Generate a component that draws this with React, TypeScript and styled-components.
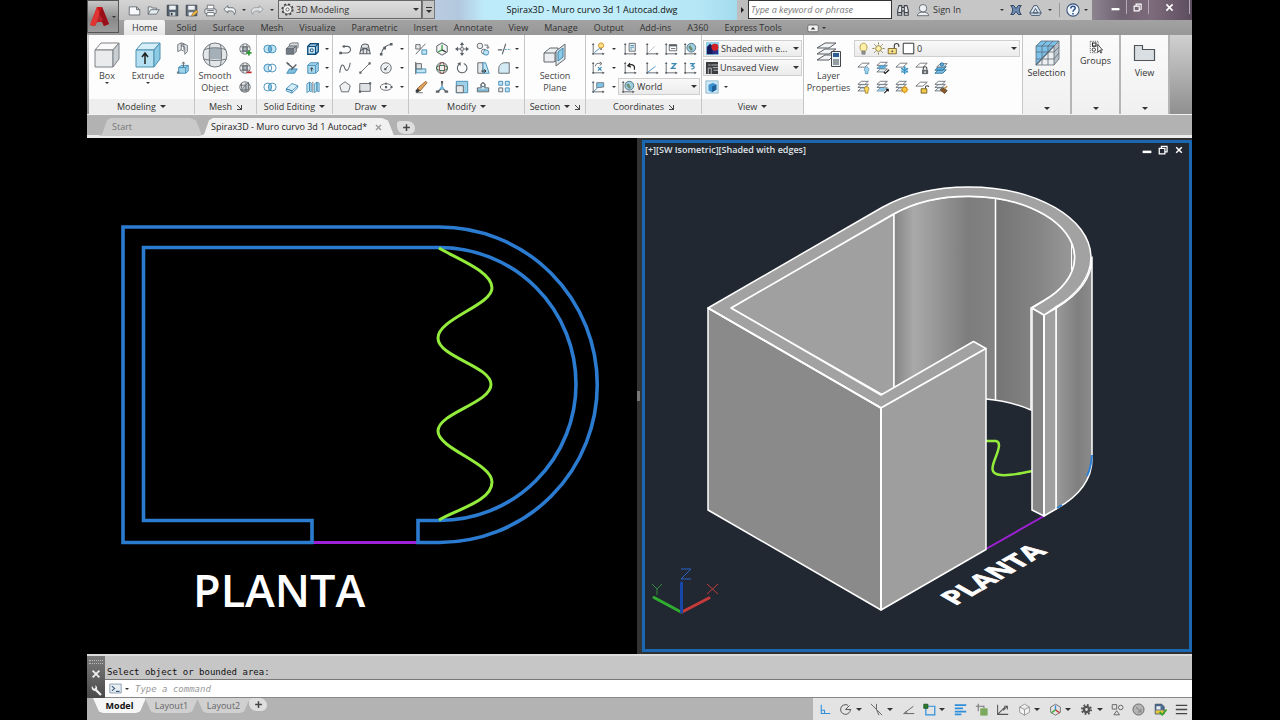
import React from "react";
import styled, { createGlobalStyle, css } from "styled-components";

const ui = `"Open Sans", "Noto Sans", sans-serif`;
const mono = `"DejaVu Sans Mono", "Liberation Mono", monospace`;

const GlobalStyle = createGlobalStyle`
  *, *::before, *::after { box-sizing: border-box; }
  body { margin: 0; background: #000; font-family: ${ui}; font-size: 9px; line-height: 12px; color: #333; }
  button, input, select { font: inherit; color: inherit; margin: 0; }
  button { border: 0; padding: 0; background: none; cursor: pointer; }
  svg { display: block; flex: none; }
`;

/* ---------- icons: 16 x 16 grid ---------- */
const K = "#5a6066";
const B = "#3b88b4";
const L = "#bfe4f4";
const axes = (
  <>
    <path d="M2.500 2v11.500H15" stroke={K} fill="none" />
    <path d="M1 3.500 2.500 1 4 3.500M13 12l2.500 1.500L13 15M1.500 12.500h2v2h-2z" fill={K} />
  </>
);
const sheets = (
  <g fill="#e8f4fa" stroke={K} strokeWidth=".9">
    <path d="M1 12.500 5 9h8l-4 3.500z" />
    <path d="M1 8.500 5 5h8L9 8.500z" />
    <path d="M1 5 5 1.500h8L9 5z" fill="#fff" />
  </g>
);
const oneSheet = <path d="M1 7 6 2.500h8L9 7z" fill="#fff" stroke={K} strokeWidth=".9" />;
const two = (a: string, b: string, c: string) => (
  <>
    <circle cx="5.500" cy="8" r="4.500" fill={a} />
    <circle cx="10.500" cy="8" r="4.500" fill={b} />
    <path d="M8 4.300a4.500 4.500 0 0 1 0 7.400 4.500 4.500 0 0 1 0-7.400z" fill={c} />
    <g fill="none" stroke={B}>
      <circle cx="5.500" cy="8" r="4.500" />
      <circle cx="10.500" cy="8" r="4.500" />
    </g>
  </>
);
const sphere = (
  <g stroke={K} strokeWidth=".8">
    <circle cx="8" cy="8" r="6" fill="#e9ebec" />
    <path d="M5.500 5.500h5v5h-5z" fill="#a9b2b9" />
    <path d="M2.500 5.500h11M2.500 10.500h11M6 2.500 5.500 5.500v5L6 13.500M10 2.500l.5 3v5l-.5 3" fill="none" />
  </g>
);

const icons: Record<string, React.ReactNode> = {
  new: <path d="M1.500 3.500h9l4 3.500v6.500h-13zM10.500 3.500V7h4" fill="#f7f9fa" stroke={K} />,
  open: <path d="M1.500 12.500v-9h4l1 1.500h5v2M1.500 12.500l3-5.500h10.500l-3.500 5.500z" fill="#e7eef2" stroke={K} />,
  save: (
    <>
      <path d="M1.500 1.500h13v13h-13z" fill="#54616e" stroke="#333b44" />
      <path d="M4 2h8v5H4z" fill="#eef2f5" />
      <path d="M4.500 10h7v4.500h-7z" fill="#c9d3da" />
      <path d="M6 11h2v3H6z" fill="#333" />
    </>
  ),
  saveas: (
    <>
      <path d="M1.500 1.500h13v13h-13z" fill="#66717c" stroke="#333b44" />
      <path d="M4 2h8v5H4zM4.500 10h6v4.500h-6z" fill="#eef2f5" />
      <path d="m8 15 1-3 5-4.500 2 2L11 14z" fill="#f2c04c" stroke="#8a5a12" strokeWidth=".7" />
    </>
  ),
  print: (
    <g stroke={K}>
      <path d="M4 6V1.500h8V6" fill="#fff" />
      <rect x="1" y="6" width="14" height="6" rx="1.500" fill="#dfe3e6" />
      <path d="M4 10.500h8l1 4H3z" fill="#fff" />
      <path d="M4 8h8" />
    </g>
  ),
  undo: <path d="M1 6.500 6 2v2.500h3.500A5 5 0 0 1 14 13c0-3-2-4.500-4.500-4.500H6V11z" fill="#eef3f6" stroke={K} />,
  redo: <path d="M15 6.500 10 2v2.500H6.500A5 5 0 0 0 2 13c0-3 2-4.500 4.500-4.500H10V11z" fill="#e2e4e5" stroke="#8f9497" />,
  gear: (
    <>
      <circle cx="8" cy="8" r="6.500" fill="none" stroke="#444" strokeWidth="2" strokeDasharray="2.600 2.500" />
      <circle cx="8" cy="8" r="5.400" fill="#f4f4f4" stroke="#444" />
      <circle cx="8" cy="8" r="2" fill="#fff" stroke="#444" />
    </>
  ),
  gearDark: (
    <>
      <circle cx="8" cy="8" r="5.500" fill="none" stroke="#555" strokeWidth="2.500" strokeDasharray="2.200 2.100" />
      <circle cx="8" cy="8" r="3.200" fill="none" stroke="#555" strokeWidth="3" />
    </>
  ),
  binoculars: (
    <path d="M2 14V8l1.500-5h3v11zM9.500 14V3h3L14 8v6zM6.500 5h3v4h-3zM2 11h4.500M9.500 11H14" fill="#e4e4e6" stroke="#3b4048" strokeWidth="1.200" />
  ),
  user: (
    <g fill="#eef1f4" stroke={K}>
      <path d="M1.500 14.500c0-3 3-3.500 5-4h3c2 .5 5 1 5 4z" />
      <circle cx="8" cy="6" r="4.300" />
    </g>
  ),
  exchange: (
    <path d="M1 2h4l3 4 3-4h4c-2 3-2.500 4-2.500 6s.5 3 2.500 6h-4l-3-4-3 4H1c2-3 2.500-4 2.500-6S3 5 1 2z" fill="#6f8db4" stroke="#1f3452" strokeWidth="1.100" />
  ),
  a360: (
    <g fill="#dfe8f2" stroke="#46586e" strokeWidth="1.200">
      <path d="M6 2h4l5 9-2 3H3l-2-3z" />
      <path d="M8 5.500 11 11H5zM1 11h14" fill="none" />
    </g>
  ),
  help: (
    <>
      <circle cx="8" cy="8" r="7" fill="#f4f8fc" stroke="#35507a" strokeWidth="1.200" />
      <path d="M5.500 6.200c0-3.400 5-3.200 5-.3 0 1.800-2.500 1.900-2.500 4M8 11.300v1.700" fill="none" stroke="#2a4f8f" strokeWidth="1.800" />
    </>
  ),
  polysolid: (
    <g fill="#e3e6e8" stroke={K} strokeWidth=".9">
      <path d="M2 3l4-2v8l-4 2zM6 4l3-2 4 2v7l-3 3V6z" />
      <path d="M6 1l3 1v7M6 9l3 1.500" fill="none" />
    </g>
  ),
  presspull: (
    <>
      <path d="M3 7.500 6 5h8v6.500l-3 2.500H3z" fill="#9fd3ec" stroke={B} />
      <path d="M3 7.500h8V14M11 7.500 14 5" fill="none" stroke={B} />
      <path d="M8.500 7V1.500M7 3l1.500-2L10 3" fill="none" stroke={K} />
      <path d="M1 12h3v2.500H1z" fill="#6e7f8b" />
    </>
  ),
  meshMore: (
    <>
      {sphere}
      <path d="M12.500 9.500v6M9.500 12.500h6" stroke="#2f9a35" strokeWidth="2" />
    </>
  ),
  meshLess: (
    <>
      {sphere}
      <path d="M10 13h5.500" stroke="#c2262b" strokeWidth="2" />
    </>
  ),
  meshRefine: (
    <g stroke={K} strokeWidth=".9">
      <circle cx="8" cy="8" r="6" fill="#e6e9ea" />
      <path d="M3 11.500 12 2.500v8.500z" fill="#b8c0c5" />
      <path d="M4 3.500v6M2.500 6H8M9 3v10M3.500 12.500h9" fill="none" />
    </g>
  ),
  union: two(L, L, "#6fb6da"),
  subtract: two(L, "#fff", "#fff"),
  intersect: two("#fff", "#fff", "#8fcbe6"),
  cubeGrey: (
    <g stroke={K} strokeWidth=".9">
      <path d="M5 5V2.500L8 1h7v5l-3 3" fill="#d5dadd" />
      <path d="M1.500 14V7.500h8V14z" fill="#737c84" />
      <path d="M1.500 7.500 5 4.500h8L9.500 7.500zM9.500 14V7.500l3.500-3V11z" fill="#aab1b7" />
    </g>
  ),
  slice: (
    <>
      <path d="M5 9h9l-3 5H2z" fill="#7fbfe0" stroke={B} />
      <path d="m2 2 7 6M7 10 13 4" stroke={K} strokeWidth="1.600" />
      <path d="m1 1 4 1.500L4 5z" fill={K} />
    </>
  ),
  thicken: <path d="M1.500 10 8 4l6.500 2.500L8 12.500zM1.500 10v2.500L8 15v-2.500M8 15l6.500-6V6.500M8 12.500 1.500 10" fill="#d7eef8" stroke={B} />,
  boxEdges: (
    <g fill="#cfeaf6" stroke="#0c4d7c" strokeWidth="1.600">
      <path d="M2 5 5 2h9v9l-3 3H2z" />
      <path d="M2 5h9v9M11 5l3-3" fill="none" />
      <path d="M5 8h3v3H5z" fill="#fff" strokeWidth="1" />
    </g>
  ),
  boxExtrude: (
    <g fill="#a9d9ee" stroke={B}>
      <path d="M2 5 5 2h9v9l-3 3H2z" />
      <path d="M2 5h9v9M11 5l3-3" fill="none" />
      <path d="M6.500 12V8M5 9.500l1.500-2L8 9.500" stroke="#333" fill="none" />
    </g>
  ),
  separate: (
    <g fill="#bfe4f4" stroke={B} strokeWidth=".9">
      <path d="M1 4.500 4 2.500v10l-3 2zM4 2.500l2 1v10l-2-1zM9.500 4.500l3-2v10l-3 2zM12.500 2.500l2.500 1v10l-2.500-1z" />
      <path d="M7.800 2v12.500" stroke={K} />
    </g>
  ),
  polyline: (
    <>
      <path d="M6 5h4.500a3.500 3.500 0 0 1 0 7.500H4" fill="none" stroke={K} strokeWidth="1.200" />
      <path d="M1.500 11h3v3h-3zM7.500 3l-3 2 3 2z" fill={K} />
    </>
  ),
  spline: <path d="M2 13.500C3 3 6 3 7.500 7.500S12 13 14 2" fill="none" stroke={K} strokeWidth="1.200" />,
  polygon: <path d="M8 2l6 4.500L12 13.500H4L2 6.500z" fill="#eef0f1" stroke={K} />,
  helix: (
    <g fill="none" stroke={K} strokeWidth="1.200">
      <path d="M2 13.500 4 5c0-3.500 8-3.500 8 0l2 8.500z" fill="#e3e6e8" />
      <path d="M6 13.500V9c0-2.500 4-2.500 4 0v4.500M5 6.500c2 2 4 2 6 0M3.500 10c3-4 5-4 9 0" />
    </g>
  ),
  line: (
    <>
      <path d="M3 13 13 3" stroke={K} />
      <path d="M1.500 12h2.500v2.500H1.500zM12 1.500h2.500V4H12z" fill={K} />
    </>
  ),
  rect: (
    <>
      <path d="M2 4h12v9H2z" fill="#dfe2e4" stroke={K} />
      <path d="M1 12h2.500v2.500H1zM12.500 2.500H15V5h-2.500z" fill={K} />
    </>
  ),
  arc: (
    <>
      <path d="M2.500 14C3.500 8 7 3.500 14 2.500" fill="none" stroke={K} strokeWidth="1.200" />
      <path d="M1 12.500h3v3H1zM12.500 1h3v3h-3zM5 5.500h3v3H5z" fill={K} />
    </>
  ),
  circle: (
    <>
      <circle cx="8" cy="8" r="6" fill="#eceeef" stroke={K} />
      <path d="M7 9l3.500-3.500" stroke={K} />
      <path d="M6 8h2.500v2.500H6z" fill={K} />
    </>
  ),
  ellipse: (
    <>
      <ellipse cx="8" cy="8" rx="6.500" ry="3.800" fill="#fff" stroke={K} />
      <path d="M6.800 6.800h2.500v2.500H6.800zM7 3h2v2H7zM13 7h2.500v2H13z" fill={K} />
    </>
  ),
  threeScale: (
    <>
      <path d="M2 14 13 2" stroke={K} />
      <path d="M2 3h5v5H2z" fill="#eee" stroke={K} />
      <path d="M9 9h5.500v5H9z" fill={L} stroke={B} />
    </>
  ),
  align: (
    <>
      <path d="M2 1v14" stroke={K} strokeWidth="1.200" />
      <path d="M2.500 9h11v4.500h-11z" fill={L} stroke={B} />
      <path d="M2.500 3h6v6h-6z" fill="#dfe3e6" stroke={K} />
    </>
  ),
  erase: (
    <>
      <path d="M2 14.500h8" stroke={K} />
      <path d="m4 9.500 3 3L15 3 13.300 1.500z" fill="#e3a55c" stroke="#7a4818" strokeWidth=".8" />
      <path d="m4 9.500-2.500 3L3 14.500l4-2z" fill="#3b3b3b" />
    </>
  ),
  gizmoMove: (
    <>
      <path d="M8 1 14 4.500v7L8 15l-6-3.500v-7z" fill="#f2f4f5" stroke={K} strokeWidth="1.100" />
      <path d="M8 9V3M8 9l-4.500 2.500" stroke="#2f9a35" strokeWidth="1.400" />
      <path d="m8 9 4.500 2.500" stroke="#333" strokeWidth="1.400" />
    </>
  ),
  gizmoRotate: (
    <g fill="none" stroke={K} strokeWidth="1.100">
      <circle cx="8" cy="8" r="6.300" fill="#eef0f1" />
      <ellipse cx="8" cy="8" rx="3" ry="6.300" stroke="#8d4a4a" />
      <ellipse cx="8" cy="8" rx="6.300" ry="3" stroke="#3c6c45" />
    </g>
  ),
  gizmoScale: (
    <>
      <path d="M8 3v6l-5 4.500M8 9l5 4.500" fill="none" stroke={K} strokeWidth="1.500" />
      <path d="M6.800 1h2.500v3H6.800zM1 12h4v2.500H1zM11 12h4v2.500h-4z" fill={K} />
      <path d="M5 10l3-4 3 4-3 1z" fill="#6fb6da" />
    </>
  ),
  move: (
    <>
      <path d="M8 2v12M2 8h12" stroke={K} strokeWidth="1.200" />
      <path d="M8 0l2.500 3.500h-5zM8 16l2.500-3.500h-5zM0 8l3.500-2.500v5zM16 8l-3.500-2.500v5z" fill={K} />
      <path d="M6.500 6.500h3v3h-3z" fill="#fff" stroke={K} strokeWidth=".8" />
    </>
  ),
  rotate: (
    <>
      <path d="M5 3.500a5.500 5.500 0 1 0 5-.7" fill="none" stroke={K} strokeWidth="1.200" />
      <path d="M6.500 1v4.500L2.500 3z" fill={K} />
    </>
  ),
  scale: (
    <>
      <path d="M1.500 1.500h13v13h-13z" fill="#9ed0e8" stroke={B} />
      <path d="M1.500 6.500h8v8h-8z" fill="#e6e8ea" stroke={K} />
    </>
  ),
  copy: (
    <>
      <circle cx="4.500" cy="4.500" r="3.200" fill="#eee" stroke={K} />
      <circle cx="9" cy="11" r="2.800" fill="#fff" stroke={K} />
      <circle cx="11.500" cy="12" r="3" fill={L} stroke={B} />
      <path d="M9.500 3.500h4v3M12 5.500l1.500 2 1.500-2" fill="none" stroke={K} />
    </>
  ),
  stretch: (
    <>
      <path d="M2 2h6v12H2z" fill="#e4e7e9" stroke={K} />
      <path d="M8 2h3l4 12H8z" fill={L} stroke={B} />
      <path d="M6 11.500h5M9 9.500l2.500 2L9 13.500" fill="none" stroke="#222" />
    </>
  ),
  mirror: (
    <>
      <path d="M1.500 13.500h13V9H10c3-8-7-8-4 0H1.500z" fill={L} stroke={K} strokeWidth="1.100" />
      <path d="M2 11.500h12" stroke={B} />
      <circle cx="8" cy="5.500" r="2" fill="#fff" stroke={K} />
    </>
  ),
  trim: (
    <>
      <path d="M1 9h5M6 14 10 2" stroke={K} strokeWidth="1.200" />
      <path d="M9 8.500h7" stroke={B} strokeDasharray="2 1.300" />
    </>
  ),
  fillet: <path d="M2 14V9c0-4 3-7 7-7h5v12z" fill="#d3e9f3" stroke={K} />,
  array: (
    <g fill={L} stroke={B}>
      <path d="M2 1.500h4.500V6H2zM9.500 1.500H14V6H9.500zM9.500 9H14v4.500H9.500z" />
      <path d="M2 9h4.500v4.500H2z" fill="#eee" stroke={K} />
    </g>
  ),
  ucsIcon: (
    <>
      {axes}
      <path d="m4 12 6-5" stroke={B} />
      <circle cx="11.500" cy="4" r="3" fill="#ffe08a" stroke="#c98d1c" />
      <path d="M10.500 7h2v2h-2z" fill="#777" />
    </>
  ),
  ucsRot: (
    <>
      {axes}
      <path d="M5 6c0-3 3-4 6-3M10 1l2.500 2L10 5" fill="none" stroke={K} />
      <path d="m8 7 4 4m0-4-4 4" stroke={B} strokeWidth="1.500" />
    </>
  ),
  ucsFace: (
    <>
      {axes}
      <path d="M6.500 3h8v5l-8 1z" fill="#7fc3e6" stroke={K} strokeWidth=".8" />
      <path d="m3 13 4-3.500" stroke={B} />
    </>
  ),
  ucsSheet: (
    <>
      {axes}
      <path d="M7 1.500h7v9H7z" fill="#eef3f6" stroke={K} />
      <path d="M8.500 4h4M8.500 6h4M8.500 8h2" stroke={B} />
    </>
  ),
  ucsPrev: (
    <>
      {axes}
      <path d="M6 5c5-2 8 0 7 5M8 2.500 5.500 5.500 9 7" fill="none" stroke="#222" strokeWidth="1.300" />
    </>
  ),
  ucsOrigin: (
    <>
      {axes}
      <path d="m4 12 7-7" stroke="#b4bcc2" />
    </>
  ),
  ucsVector: (
    <>
      {axes}
      <path d="M3 13 12 6" stroke={B} />
    </>
  ),
  ucsNamed: (
    <>
      {axes}
      <path d="M6 3h8.500v7H6z" fill="#fff" stroke={K} />
      <path d="M6 3h8.500v2H6z" fill={K} />
      <path d="M8 7.500h5" stroke={K} />
    </>
  ),
  ucsZ: (
    <>
      {axes}
      <path d="M8.500 3h5l-5 5.500h5" fill="none" stroke={B} strokeWidth="1.500" />
    </>
  ),
  ucsWorld: (
    <>
      {axes}
      <circle cx="9.500" cy="6.500" r="5" fill="#9fd0e2" stroke="#4b6c7c" />
      <path d="M6.500 5c1-2 3-1 3 .5s2 1 1.500 3-2 2-3 0S6 7 6.500 5z" fill="#6f8f75" />
    </>
  ),
  ucs3: (
    <>
      {axes}
      <path d="M8 3h4.500L10 5.500c4 0 3.500 4-.5 3.500" fill="none" stroke={B} strokeWidth="1.500" />
    </>
  ),
  shaded: (
    <>
      <path d="M0 0h16v16H0z" fill="#8fd0e8" />
      <path d="M1 15V6l4-4 4 4v9z" fill="#141a5c" />
      <path d="M8 15V9h7v6z" fill="#2c2f86" />
      <circle cx="11" cy="6.500" r="4.300" fill="#d22027" />
    </>
  ),
  viewSaved: (
    <>
      <path d="M0 0h16v16H0z" fill="#3a3d40" />
      <path d="M3 16V8h4v8M7 4h9M9 7.500h7M3 4h3M10 11h6" stroke="#d8dadb" fill="none" />
    </>
  ),
  viewCube: (
    <>
      <path d="M1 1h14v14H1z" fill="#cde9f7" stroke="#8db3c9" />
      <path d="M4 5.500 9 3l4 2v6l-5 3-4-2z" fill="#3f93cf" />
      <path d="M8 7.500 13 5v6l-5 3z" fill="#1d5f98" />
    </>
  ),
  bulb: (
    <>
      <path d="M5.500 11C2 7 4 1.500 8 1.500S14 7 10.500 11z" fill="#fff2a8" stroke="#a58a35" />
      <path d="M6 11.500h4V15H6z" fill="#8f9498" stroke="#666" strokeWidth=".7" />
    </>
  ),
  sun: (
    <>
      <circle cx="8" cy="8" r="3.500" fill="#fff2a8" stroke="#7c6a2c" />
      <path d="M8 .5v2.500M8 13v2.500M.5 8H3M13 8h2.500M2.700 2.700l1.800 1.800M11.500 11.500l1.800 1.800M13.300 2.700l-1.800 1.800M4.500 11.500l-1.800 1.800" stroke="#7c6a2c" />
    </>
  ),
  unlock: (
    <>
      <path d="M9 8V4.500c0-3.500 5.500-3.500 5.500 0V6" fill="none" stroke="#444" strokeWidth="1.400" />
      <path d="M1.500 8h10v6.500h-10z" fill="#f7df85" stroke="#6d5a20" />
      <path d="M5.500 10.500h2v2h-2z" fill="#555" />
    </>
  ),
  swatch: <path d="M1.500 1.500h13v13h-13z" fill="#fff" stroke="#333" strokeWidth="1.200" />,
  layOff: (
    <>
      {oneSheet}
      <path d="M9.500 12c-2-2-1-5 1.500-5s3.500 3 1.500 5v2.500h-3z" fill="#9fd3ec" stroke={B} strokeWidth=".8" />
    </>
  ),
  layIso: (
    <>
      {sheets}
      <path d="M1 8.500 5 5h8L9 8.500z" fill="#56aede" />
      <path d="M9 12.500l1.500 1.800L15 10" fill="none" stroke="#111" strokeWidth="1.300" />
    </>
  ),
  layFreeze: (
    <>
      {oneSheet}
      <path d="M11 6v9M7 8.300l8 4.500M15 8.300l-8 4.500" stroke="#3a93c4" strokeWidth="1.400" />
      <circle cx="11" cy="10.500" r="3" fill="none" stroke="#3a93c4" />
    </>
  ),
  layLock: (
    <>
      {oneSheet}
      <path d="M9.500 10V8c0-2 4-2 4 0v2" fill="none" stroke="#444" strokeWidth="1.200" />
      <path d="M8 10h7v5H8z" fill="#646b70" />
      <path d="M10.500 12h2v1.500h-2z" fill="#fff" />
    </>
  ),
  layCurrent: (
    <>
      <path d="M1 14 5 10h9l-4 4z" fill="#7dc0e6" stroke="#1f5f88" strokeWidth=".9" />
      <path d="M1 10.500 5 6.500h9l-4 4z" fill="#56aede" stroke="#1f5f88" strokeWidth=".9" />
      <path d="M3 7 7 3h8l-4 4z" fill="#d9effa" stroke={K} strokeWidth=".9" />
      <circle cx="9" cy="4" r="2" fill="#56aede" stroke="#1f5f88" strokeWidth=".8" />
    </>
  ),
  layOn: (
    <>
      {sheets}
      <path d="M9.500 12.500c-2-2-1-5 1.500-5s3.500 3 1.500 5V15h-3z" fill="#fbd85c" stroke="#8c6b17" strokeWidth=".8" />
    </>
  ),
  layUniso: (
    <>
      {sheets}
      <path d="M1 12.500 5 9h8l-4 3.500z" fill="#8cc8e8" />
      <path d="M9.500 15 14 10.500M11.500 10.500H14V13" fill="none" stroke="#111" strokeWidth="1.200" />
    </>
  ),
  layThaw: (
    <>
      {sheets}
      <circle cx="11" cy="11" r="3" fill="#fbc93c" stroke="#c07f12" />
      <path d="M11 6.500v2M11 13.500v2M6.500 11h2M13.500 11h2M8 8l1 1M13 13l1 1M14 8l-1 1M9 13l-1 1" stroke="#e0981a" />
    </>
  ),
  layUnlock: (
    <>
      {oneSheet}
      <path d="M12 10V8c0-2 3.500-2 3.500 0" fill="none" stroke="#444" strokeWidth="1.200" />
      <path d="M7 10h6.500v5H7z" fill="#f3c948" stroke="#6d5a20" />
    </>
  ),
  layMatch: (
    <>
      {sheets}
      <path d="m7 11 3-2 5 3-3 3.500z" fill="#8a5a2b" stroke="#4c2f12" strokeWidth=".8" />
      <path d="m12 10 3-3" stroke="#c79a5b" strokeWidth="2" />
    </>
  ),
  groups: (
    <>
      <path d="M1.500 1.500h9v13h-9z" fill="#fff" stroke={K} strokeDasharray="1.500 1" />
      <path d="M4 3.500h4v3.500H4z" fill="none" stroke="#222" strokeWidth="1.200" />
      <circle cx="5.500" cy="11" r="1.900" fill="none" stroke="#222" />
      <path d="M10 5v9l2-2 1.500 3 1-.5-1.500-3h2.500z" fill="#fff" stroke="#222" strokeWidth=".9" />
    </>
  ),
  prompt: (
    <>
      <path d="M1 2.500h14v11H1z" fill="#e9eef3" stroke="#7b8fa5" />
      <path d="M3.500 5l3.500 3-3.500 3M8.500 11.500H13" fill="none" stroke="#3a5b80" strokeWidth="1.400" />
    </>
  ),
  cross: <path d="M3.500 3.500l9 9M12.500 3.500l-9 9" stroke="currentColor" strokeWidth="2.400" />,
  wrench: <path d="M2.500 2.500A4 4 0 0 0 6.500 8.500l6 6 2-2-6-6A4 4 0 0 0 6 1.500L7 4 5 6z" fill="currentColor" />,
  plus: <path d="M8 2v12M2 8h12" stroke="currentColor" strokeWidth="2.600" />,
  ortho: <path d="M4 2v11h11M4 9h4v4" fill="none" stroke="#2f8fdb" strokeWidth="1.300" />,
  polar: <path d="M14 8a6 6 0 1 1-3-5.200M8 8h7M8 8l5-5" fill="none" stroke="#555" strokeWidth="1.200" />,
  isoDraft: <path d="M1 1l14 14M8 8V1M8 8l3 7" fill="none" stroke="#666" strokeWidth="1.200" />,
  angle: <path d="M14 4 2 13h13M6 13a6 6 0 0 0-1-3" fill="none" stroke="#666" strokeWidth="1.200" />,
  osnap: (
    <>
      <path d="M3.500 4h11v10.500h-11z" fill="none" stroke="#2f8fdb" strokeWidth="1.500" />
      <path d="M1 1.500h5v5H1z" fill="#2c7d2c" stroke="#1b4d1b" />
    </>
  ),
  lineweight: <path d="M1 2.500h14M1 6.500h10M1 10.500h14M1 14h8" stroke="#2f8fdb" strokeWidth="2.200" />,
  cycling: (
    <>
      <path d="M6.500 6.500h9v9h-9z" fill="#79a95c" />
      <path d="M1 4h10v2M4 1v9" fill="none" stroke="#777" strokeWidth="1.300" />
    </>
  ),
  dynUcs: <path d="M2 2v12h13M2 14 11 5M9 9l5-5M10 4h4v4" fill="none" stroke="#555" strokeWidth="1.300" />,
  cubeWire: <path d="M8 1.500 14 5v6.500L8 15l-6-3.500V5zM2 5l6 3.200L14 5M8 8.200V15" fill="#f3f3f3" stroke="#8a8a8a" />,
  gizmo: (
    <>
      <path d="M8 1.500 14 5v6.500L8 15l-6-3.500V5z" fill="none" stroke="#777" strokeWidth="1.200" />
      <path d="M8 8.500V3" stroke="#2f8fdb" strokeWidth="1.600" />
      <path d="m8 8.500 5 3.500" stroke="#c33" strokeWidth="1.600" />
      <path d="m8 8.500-5 3.500" stroke="#3a3" strokeWidth="1.600" />
    </>
  ),
  shapes: (
    <g fill="none" stroke="#666" strokeWidth="1.200">
      <path d="M1.500 2h5.500v5.500H1.500zM7 9.500l3.500 5h-7z" />
      <circle cx="12" cy="5.500" r="2.800" />
    </g>
  ),
  isolate: (
    <>
      <circle cx="8" cy="8" r="6.800" fill="#b5b5b5" stroke="#666" strokeWidth="1.200" />
      <path d="M5 5l6 6M11 7v4H7" fill="none" stroke="#888" strokeWidth="1.300" />
    </>
  ),
  perf: (
    <>
      <path d="M1.500 1.500h8l3 3v9h-11z" fill="#4d6d92" stroke="#33475f" />
      <path d="M3 4h5v4H3z" fill="#e8edf2" />
      <path d="M2 9h10v4H2z" fill="#e8c53a" />
      <path d="m7 11 3 3.500L15.500 8" fill="none" stroke="#3fa52a" strokeWidth="2.200" />
    </>
  ),
  menu: <path d="M1 3h14M1 8h14M1 13h14" stroke="#444" strokeWidth="1.600" />,
  ribbonMin: (
    <>
      <rect x="1" y="4" width="14" height="9" rx="2" fill="#f1f1f1" stroke="#555" />
      <path d="m5 10 3-3.500L11 10z" fill="#333" />
    </>
  ),
  minimize: <path d="M1 9h14v4H1z" fill="currentColor" />,
  restore: <path d="M5.500 5V2h9v9H12M2 5.500h9V14H2z" fill="none" stroke="currentColor" strokeWidth="2" />,
};

const Icon = ({ name, size = 14 }: { name: string; size?: number }) => (
  <svg width={size} height={size} viewBox="0 0 16 16" aria-hidden="true">
    {icons[name]}
  </svg>
);

/* ---------- shared parts ---------- */
const Triangle = styled.span<{ $size?: number; $color?: string }>`
  display: block;
  flex: none;
  border: ${(p) => p.$size ?? 3}px solid transparent;
  border-top-color: ${(p) => p.$color ?? "#333"};
  border-bottom: 0;
`;

const IconButton = styled.button<{ $w?: number }>`
  display: flex;
  align-items: center;
  justify-content: center;
  width: ${(p) => (p.$w ? `${p.$w}px` : "auto")};
  min-width: 0;
  height: 100%;
  flex: none;
`;

const CaretButton = styled(IconButton)`
  width: ${(p) => p.$w ?? 9}px;
`;

const Caret = ({ label, w, size = 2 }: { label: string; w?: number; size?: number }) => (
  <CaretButton $w={w} aria-label={label}>
    <Triangle $size={size} />
  </CaretButton>
);

const Tool = ({ name, w, size }: { name: string; w?: number; size?: number }) => (
  <IconButton $w={w} aria-label={name}>
    <Icon name={name} size={size} />
  </IconButton>
);

/* ---------- frame ---------- */
const Page = styled.div`
  display: flex;
  flex-direction: column;
  min-height: 100vh;
  margin: 0 88px 0 87px;
  background: #b0b0b0;
`;

const Header = styled.header`
  display: grid;
  grid-template-columns: 32px minmax(0, 1fr);
  grid-template-rows: 20px 15px;
  background: #9c9c9c;
`;

const AppButton = styled.button`
  grid-row: 1 / 3;
  height: 33px;
  display: flex;
  align-items: center;
  justify-content: center;
  gap: 2px;
  background: linear-gradient(#c8c8c8, #8a8a8a 60%, #9c9c9c);
  border: 1px solid #555;
`;

const TitleBar = styled.div`
  display: flex;
  align-items: stretch;
  background: #c6c6c6;
  min-width: 0;
`;

const QuickAccess = styled.div`
  display: flex;
  padding: 0 2px 0 6px;
  background: linear-gradient(#d4d4d4, #c0c0c0);
`;

const Picker = styled.label<{ $w?: number; $dark?: boolean }>`
  display: flex;
  align-items: center;
  gap: 2px;
  width: ${(p) => (p.$w ? `${p.$w}px` : "auto")};
  height: ${(p) => (p.$dark ? 19 : 17)}px;
  padding: 0 2px;
  border: 1px solid ${(p) => (p.$dark ? "#666" : "#cfcfcf")};
  background: ${(p) => (p.$dark ? "linear-gradient(#dedede, #c9c9c9)" : "linear-gradient(#f9f9f9, #ebebeb)")};
`;

const PickerSelect = styled.select`
  appearance: none;
  flex: 1;
  min-width: 0;
  height: 14px;
  padding: 0;
  border: 0;
  background: none;
  line-height: 14px;
  text-overflow: ellipsis;
  outline: none;
`;

const OverflowButton = styled(IconButton)`
  width: 13px;
  height: 19px;
  flex-direction: column;
  gap: 2px;
  border: 1px solid #777;
  &::before { content: ""; width: 6px; height: 1px; background: #333; }
`;

const DocumentTitle = styled.h1`
  flex: 1;
  min-width: 0;
  margin: 0;
  padding-left: 12px;
  overflow: hidden;
  font-size: 9px;
  font-weight: 400;
  line-height: 19px;
  text-align: center;
  white-space: nowrap;
  color: #111;
  background: linear-gradient(90deg, #b9cbe0, #b3c8de 8%, #bdeaf8 16%, #c3effb 50%, #b4e6f5 88%, #a3dbee);
`;

const Expander = styled(IconButton)`
  width: 11px;
  background: #bdbdbd;
  &::before { content: ""; border: 3px solid transparent; border-left: 3px solid #222; border-right: 0; }
`;

const Search = styled.input`
  width: 144px;
  height: 19px;
  padding: 0 2px;
  border: 1px solid #333;
  border-radius: 0;
  background: #fff;
  outline: none;
  &::placeholder { color: #777; font-style: italic; opacity: 1; }
`;

const SignIn = styled.button`
  display: flex;
  align-items: center;
  gap: 3px;
  width: 94px;
  padding: 0 3px;
  white-space: nowrap;
  ${Triangle} { margin-left: auto; }
`;

const Separator = styled.span`
  width: 1px;
  margin: 3px 5px;
  background: #999;
`;

const WindowControls = styled.div`
  display: flex;
  align-items: flex-start;
  width: 100px;
  padding: 0 1px 0 13px;
  color: #fff;
  background: linear-gradient(90deg, #8d8490, #6f6171 30%, #7d6b7b 60%, #5c4d5e);
`;

const WindowButton = styled.button<{ $w: number }>`
  display: flex;
  align-items: center;
  justify-content: center;
  width: ${(p) => p.$w}px;
  height: 14px;
  border-right: 1px solid #b7a9b8;
`;

const RibbonTabs = styled.nav`
  display: flex;
  padding-left: 5px;
  min-width: 0;
  background: linear-gradient(#a2a2a2, #979797);
`;

const RibbonTab = styled.button<{ $active?: boolean }>`
  padding: 0 8px;
  height: 15px;
  line-height: 15px;
  color: #333;
  white-space: nowrap;
  ${(p) => p.$active && css`
    margin-right: 3px;
    background: linear-gradient(#f4f4f4, #e6e6e6);
    border-radius: 2px 2px 0 0;
  `}
`;

const RibbonDisplay = styled.div`
  display: flex;
  padding-left: 16px;
`;

/* ---------- ribbon ---------- */
const Ribbon = styled.section`
  display: flex;
  height: 80px;
  padding-left: 2px;
  border-bottom: 1px solid #f2f2f2;
  background: linear-gradient(#d0d0d0, #8f8f8f);
`;

const PanelBox = styled.section<{ $w: number }>`
  display: flex;
  flex-direction: column;
  width: ${(p) => p.$w}px;
  flex: none;
  background: #fdfdfd;
  border-right: 1px solid #c6c6c6;
`;

const PanelBody = styled.div`
  display: flex;
  flex: 1;
  padding: 4px 1px 0;
`;

const PanelFooter = styled.div`
  display: flex;
  align-items: center;
  justify-content: center;
  height: 15px;
  gap: 5px;
  background: #eee;
  white-space: nowrap;
`;

const PanelTitle = styled.button`
  display: flex;
  align-items: center;
  gap: 4px;
  line-height: 15px;
`;

const Launcher = styled.button`
  width: 5px;
  height: 5px;
  margin-top: 2px;
  border: solid #444;
  border-width: 0 1px 1px 0;
  background: linear-gradient(45deg, transparent 40%, #444 40%, #444 60%, transparent 60%);
`;

const BigButton = styled.button<{ $w: number }>`
  display: flex;
  flex-direction: column;
  align-items: center;
  width: ${(p) => p.$w}px;
  flex: none;
  white-space: nowrap;
  color: #444;
`;

const BigArt = styled.span`
  display: flex;
  align-items: center;
  justify-content: center;
  height: 31px;
`;

const ToolGrid = styled.div<{ $cols: string }>`
  display: grid;
  grid-template-columns: ${(p) => p.$cols};
  grid-template-rows: repeat(3, 19px);
  justify-items: center;
  align-items: center;
  align-content: start;
  flex: 1;
`;

const LayerTools = styled.div`
  flex: 1;
  min-width: 0;
  padding: 1px 1px 0 2px;
  display: flex;
  flex-direction: column;
  gap: 1px;
`;

const SpanCell = styled.div`
  grid-column: 3 / -1;
  justify-self: stretch;
`;

const ViewColumn = styled.div`
  display: grid;
  grid-template-rows: repeat(3, 19px);
  align-content: start;
  align-items: center;
  flex: 1;
  min-width: 0;
`;

const Inline = styled.div`
  display: flex;
  align-items: center;
  height: 19px;
`;

const Collapsed = styled.button<{ $w: number }>`
  display: flex;
  flex-direction: column;
  align-items: center;
  width: ${(p) => p.$w}px;
  padding: 4px 0;
  flex: none;
  border-right: 2px solid #b5b5b5;
  background: linear-gradient(#fbfbfb, #f0f0f0);
  > ${Triangle} { margin-top: auto; }
`;

const CollapsedArt = styled.span<{ $h: number }>`
  display: flex;
  align-items: center;
  height: ${(p) => p.$h}px;
`;

type PanelProps = { title: string; w: number; menu?: boolean; launcher?: boolean; children: React.ReactNode };
const Panel = ({ title, w, menu, launcher, children }: PanelProps) => (
  <PanelBox $w={w}>
    <PanelBody>{children}</PanelBody>
    <PanelFooter>
      <PanelTitle>
        {title}
        {menu && <Triangle />}
      </PanelTitle>
      {launcher && <Launcher aria-label={`${title} settings`} />}
    </PanelFooter>
  </PanelBox>
);

const toolRows = (rows: string[][], caret = true) =>
  rows.map((row, i) => (
    <React.Fragment key={i}>
      {row.map((n) => (
        <Tool key={n} name={n} />
      ))}
      {caret && <Caret label={`More ${row[row.length - 1]}`} />}
    </React.Fragment>
  ));

const BoxArt = ({ blue }: { blue?: boolean }) => (
  <svg width="26" height="26" viewBox="0 0 26 26" aria-hidden="true">
    <g stroke={blue ? "#4a8fb0" : "#7c8186"} strokeLinejoin="round">
      <path d="M1 8 7 1h18l-6 7z" fill={blue ? "#d5eef8" : "#fbfbfb"} />
      <path d="M1 8h18v17H1z" fill={blue ? "#b5e0f1" : "#e9ebed"} />
      <path d="M19 8l6-7v16l-6 8z" fill={blue ? "#8ccae4" : "#c9ced2"} />
    </g>
    {blue && <path d="M10 22V12M7 15l3-4 3 4" fill="none" stroke="#222" strokeWidth="1.500" />}
  </svg>
);

const SmoothArt = () => (
  <svg width="26" height="26" viewBox="0 0 26 26" aria-hidden="true">
    <circle cx="13" cy="13" r="12" fill="#e3e6e9" stroke="#73797f" />
    <path d="M8 6h11v11H8z" fill="#a5afb8" />
    <path d="M2 8c6-3 16-3 22 0M1.500 17c7 2 16 2 23 0M8 2c-1 6-1 16 0 22M18 2c2 6 2 16 0 22" fill="none" stroke="#73797f" />
  </svg>
);

const SectionArt = () => (
  <svg width="26" height="26" viewBox="0 0 26 26" aria-hidden="true">
    <path d="M2 11l6-5h8v11l-4 3H2z" fill="#eceeef" stroke="#63696e" />
    <path d="M2 11h11v9M13 11l4-4" fill="none" stroke="#63696e" />
    <path d="M14 9 23 2v15l-9 7z" fill="#dfe8ec" stroke="#63696e" />
    <path d="M16 10l5-4v9l-5 4z" fill="#8dcbe6" stroke="#3b86ad" />
  </svg>
);

const LayerArt = () => (
  <svg width="26" height="26" viewBox="0 0 26 26" aria-hidden="true">
    <g fill="#f2f4f5" stroke="#565c62">
      <path d="M1 18l8-5h9l-5 5z" />
      <path d="M1 12l8-5h11l-7 5z" />
      <path d="M1 6l8-5h11l-7 5z" />
    </g>
    <path d="M15.500 9.500h9v15h-9z" fill="#eaf4f9" stroke="#41464b" />
    <path d="M17 11h6v4h-6z" fill="#2d5f91" />
    <path d="M17 18h6M17 20h6M17 22h6" stroke="#41464b" />
  </svg>
);

const SelectionArt = () => (
  <svg width="26" height="26" viewBox="0 0 26 26" aria-hidden="true">
    <path d="M2 6 7 1h18v18l-5 6H2z" fill="#eceef0" />
    <path d="M20 6l5-5v18l-5 6z" fill="#b9c0c6" />
    <path d="M2 6 7 1h18l-5 5L2 25z" fill="#7cc1ea" />
    <g fill="none" stroke="#5a6a76" strokeWidth=".8">
      <path d="M2 6h18v19H2zM2 6l5-5h18v18l-5 6M20 6l5-5M8 6v19M14 6v19M2 12h18M2 19h18M8 6l5-5M14 6l5-5M20 12l5-5M20 19l5-6" />
      <path d="M2 25 20 6" strokeWidth="1.300" />
    </g>
  </svg>
);

const ViewArt = () => (
  <svg width="23" height="18" viewBox="0 0 23 18" aria-hidden="true">
    <path d="M1.500 1.500h8v4h12v11h-20z" fill="#dadfe4" stroke="#50555a" strokeWidth="1.200" />
  </svg>
);

const LogoArt = () => (
  <svg width="20" height="22" viewBox="0 0 20 22" aria-hidden="true">
    <path d="M7 1h5l7 17-5 2-2-4H7l-2 4-5-1z" fill="#c9161c" />
    <path d="M7 1 0 19l5 1 5-12z" fill="#e03532" />
    <path d="M12 1l7 17-5 2-5-11z" fill="#98111a" />
    <path d="M9 9l-2 6 6-1-3-5z" fill="#b8262b" />
  </svg>
);

/* ---------- document tabs ---------- */
const DocTabs = styled.nav`
  display: flex;
  align-items: flex-end;
  height: 23px;
  padding: 0 0 2px 11px;
  background: linear-gradient(#b2b2b2, #b2b2b2 20px, #ececec 20px);
`;

const DocTab = styled.button<{ $w: number; $active?: boolean }>`
  display: flex;
  align-items: center;
  justify-content: space-between;
  width: ${(p) => p.$w}px;
  height: 18px;
  padding: 0 11px 0 ${(p) => (p.$active ? 11 : 14)}px;
  margin-right: ${(p) => (p.$active ? 3 : -2)}px;
  color: ${(p) => (p.$active ? "#222" : "#777")};
  background: ${(p) => (p.$active ? "#f1f1f1" : "#cacaca")};
  clip-path: polygon(0 100%, 4px 92%, 9px 12%, 13px 0, calc(100% - 12px) 0, calc(100% - 6px) 14%, calc(100% - 2px) 70%, 100% 100%);
  white-space: nowrap;
  svg { color: #999; }
`;

const AddTab = styled.button`
  display: flex;
  align-items: center;
  justify-content: center;
  width: 18px;
  height: 13px;
  margin-bottom: 2px;
  border-radius: 3px 8px 6px 8px;
  background: #dedede;
  color: #444;
`;

/* ---------- viewports ---------- */
const Workspace = styled.main`
  display: grid;
  grid-template-columns: minmax(0, 1fr) 5px minmax(0, 1fr);
  flex: 1;
  min-height: 516px;
  background: #303030;
`;

const PlanPane = styled.div`
  display: flex;
  flex-direction: column;
  background: #000;
`;

const Splitter = styled.div`
  display: flex;
  align-items: center;
  background: #333;
  &::before { content: ""; width: 3px; height: 10px; background: #777; }
`;

const IsoPane = styled.div`
  display: flex;
  flex-direction: column;
  margin: 2px 0;
  border: 3px solid #1b67b2;
  background: #222831;
`;

const IsoBar = styled.div`
  display: flex;
  align-items: center;
  justify-content: space-between;
  height: 13px;
  flex: none;
  padding-right: 5px;
  font-weight: 600;
  line-height: 13px;
  color: #dfe3e8;
  white-space: nowrap;
`;

const PaneControls = styled.div`
  display: flex;
  gap: 6px;
  color: #fff;
`;

const Drawing = styled.svg`
  width: 100%;
  height: 0;
  min-height: 0;
  flex: 1 1 0;
`;

const PlanDrawing = () => (
  <Drawing viewBox="87 138 550 516" preserveAspectRatio="xMidYMid meet" role="img" aria-label="Floor plan">
    <path d="M312 542.500H418" stroke="#a020d8" strokeWidth="3" />
    <g fill="none" stroke="#2b7bd0" strokeWidth="3.600">
      <path d="M439.500 227H123V542.500H312V520.500H143.500V247.500H439.500A136.500 136.500 0 0 1 439.500 520.500H418V542.500H439.500A157.750 157.750 0 0 0 439.500 227Z" />
    </g>
    <path
      d="M439 248C455 258 492 271 492 288S438 319 438 338 491 366 491 384.500 438 413 438 431 492 463 492 482 458 509 439 520"
      fill="none"
      stroke="#93ec3c"
      strokeWidth="3"
    />
    <text x="193" y="607" fontFamily={ui} fontSize="45" fontWeight="600" fill="#fff">
      PLANTA
    </text>
  </Drawing>
);

const IsoDrawing = () => (
  <Drawing viewBox="645 156 544 493" preserveAspectRatio="xMidYMid meet" role="img" aria-label="Isometric wall model">
    <defs>
      <linearGradient id="inside" gradientUnits="userSpaceOnUse" x1="894" x2="1075" y1="0" y2="0">
        <stop offset="0" stopColor="#858585" />
        <stop offset=".11" stopColor="#a9a9a9" />
        <stop offset=".25" stopColor="#959595" />
        <stop offset=".41" stopColor="#7d7d7d" />
        <stop offset=".56" stopColor="#838383" />
        <stop offset=".57" stopColor="#757575" />
        <stop offset=".8" stopColor="#858585" />
        <stop offset="1" stopColor="#9a9a9a" />
      </linearGradient>
      <linearGradient id="outside" gradientUnits="userSpaceOnUse" x1="1056" x2="1092" y1="0" y2="0">
        <stop offset="0" stopColor="#9a9a9a" />
        <stop offset=".6" stopColor="#808080" />
        <stop offset="1" stopColor="#8b8b8b" />
      </linearGradient>
    </defs>
    <path d="M986 549 1044 516" stroke="#a020d8" strokeWidth="2" />
    <path d="M985 441H996C1001 442 999 449 995 459S991 474 1001 475 1020 473 1033 471" fill="none" stroke="#93ec3c" strokeWidth="2.500" />
    <g stroke="#fff" strokeWidth="1.500" strokeLinejoin="round">
      <path d="M731 308 894 214V394H881Z" fill="#a0a0a0" />
      <path d="M894 214A106 61 0 0 1 1043 301L1031 308V410Q1010 401 986 399L894 396Z" fill="url(#inside)" />
      <path d="M995.500 199V400" fill="none" />
      <path d="M1056 308Q1092 287 1092 257V459Q1092 489 1056 509Z" fill="url(#outside)" />
      <path d="M1032 308 1044 315V516L1032 510Z" fill="#868686" />
      <path d="M1044 315 1056 308V509L1044 516Z" fill="#a0a0a0" />
      <path
        d="M708 308 882 207.500A122.500 70.600 0 0 1 1055 307.500L1044 315 1032 308 1043.500 301A106 61.200 0 0 0 893.500 214L731 308 881 395 973.500 341.500 986 348.500 881 408Z"
        fill="#a2a2a2"
      />
      <path d="M708 308 881 408V610L708 510Z" fill="#8a8a8a" />
      <path d="M881 408 986 348.500V549.500L881 610Z" fill="#9e9e9e" />
    </g>
    <path d="M708 308 881 408V610M1044 316V516" fill="none" stroke="#fff" strokeWidth="2" />
    <path d="M1071.500 244V270" fill="none" stroke="#fff" strokeWidth="1" />
    <path d="M1092 455Q1091 468 1087 476M1062 505 1057 508" fill="none" stroke="#2e7fd6" strokeWidth="2" />
    <text
      transform="matrix(.866 -.5 .866 .5 955 606)"
      fontFamily={ui}
      fontSize="27"
      fontWeight="700"
      fill="#fff"
      stroke="#fff"
      strokeWidth=".8"
    >
      PLANTA
    </text>
    <g fill="none" strokeWidth="3" strokeLinecap="round">
      <path d="M681 612 654 597.500" stroke="#2fae2f" />
      <path d="M682 612 709 598" stroke="#c73a3a" />
      <path d="M681.500 612V583" stroke="#1747a8" />
    </g>
    <g fill="none" strokeWidth="1">
      <path d="M652 584l5 5 5-5M657 589v6" stroke="#2f8a3f" />
      <path d="M707 584l11 10M718 584l-11 10" stroke="#c23c3c" />
      <path d="M681 569h10l-10 10h10" stroke="#2b62c9" />
    </g>
  </Drawing>
);

/* ---------- command line and status ---------- */
const CommandArea = styled.section`
  display: grid;
  grid-template-columns: 18px minmax(0, 1fr);
  grid-template-rows: 24px 18px;
  border-top: 2px solid #dcdcdc;
  font-family: ${mono};
`;

const CommandGrip = styled.div`
  grid-row: 1 / 3;
  display: flex;
  flex-direction: column;
  align-items: center;
  justify-content: space-between;
  padding: 4px 0 1px;
  color: #eee;
  background: linear-gradient(#7b7b7b, #4a4a4a);
  &::before { content: ""; width: 14px; height: 4px; border: dotted #bbb; border-width: 1px 0; }
`;

const History = styled.output`
  padding: 8px 2px 0;
  line-height: 16px;
  color: #111;
  background: #c6c6c6;
  border-bottom: 1px solid #777;
`;

const CommandRow = styled.label`
  display: flex;
  align-items: center;
  padding-left: 4px;
  gap: 3px;
  background: #fff;
  border-bottom: 1px solid #888;
`;

const CommandInput = styled.input`
  flex: 1;
  min-width: 0;
  height: 15px;
  padding: 0 3px;
  border: 0;
  outline: none;
  background: none;
  &::placeholder { color: #999; font-style: italic; opacity: 1; }
`;

const StatusBar = styled.footer`
  display: flex;
  justify-content: space-between;
  height: 22px;
  background: #b3b3b3;
`;

const LayoutTabs = styled.div`
  display: flex;
  padding-left: 6px;
`;

const LayoutTab = styled.button<{ $active?: boolean }>`
  width: 53px;
  height: 15px;
  margin-right: -1px;
  line-height: 15px;
  clip-path: polygon(0 0, 100% 0, calc(100% - 6px) 90%, calc(100% - 10px) 100%, 10px 100%, 6px 90%);
  color: ${(p) => (p.$active ? "#111" : "#666")};
  font-weight: ${(p) => (p.$active ? 700 : 400)};
  background: ${(p) => (p.$active ? "#f6f6f6" : "#d0d0d0")};
`;

const StatusTools = styled.div`
  display: flex;
  align-items: center;
  justify-content: space-between;
  width: 379px;
  padding: 0 4px 0 5px;
  background: #e3e3e3;
`;

const StatusGroup = styled.div`
  display: flex;
  align-items: center;
  gap: 3px;
  height: 100%;
`;

const statusItems: [string, boolean][] = [
  ["ortho", false],
  ["polar", true],
  ["isoDraft", true],
  ["angle", false],
  ["osnap", true],
  ["lineweight", false],
  ["cycling", false],
  ["dynUcs", false],
  ["cubeWire", true],
  ["gizmo", true],
  ["gearDark", true],
  ["shapes", false],
  ["isolate", false],
  ["perf", false],
  ["menu", false],
];

const tabs = ["Home", "Solid", "Surface", "Mesh", "Visualize", "Parametric", "Insert", "Annotate", "View", "Manage", "Output", "Add-ins", "A360", "Express Tools"];

export default function App() {
  return (
    <>
      <GlobalStyle />
      <Page>
        <Header>
          <AppButton aria-label="Application menu">
            <LogoArt />
            <Triangle $size={2} />
          </AppButton>
          <TitleBar>
            <QuickAccess>
              {["new", "open", "save", "saveas", "print", "undo"].map((n) => (
                <Tool key={n} name={n} w={19} size={13} />
              ))}
              <Caret label="Undo list" />
              <Tool name="redo" w={19} size={13} />
              <Caret label="Redo list" />
            </QuickAccess>
            <Picker $w={144} $dark>
              <Icon name="gear" size={13} />
              <PickerSelect aria-label="Workspace">
                <option>3D Modeling</option>
              </PickerSelect>
              <Triangle />
            </Picker>
            <OverflowButton aria-label="Customize quick access">
              <Triangle />
            </OverflowButton>
            <DocumentTitle>Spirax3D - Muro curvo 3d 1 Autocad.dwg</DocumentTitle>
            <Expander aria-label="Collapse search" />
            <Search type="search" aria-label="Search help" placeholder="Type a keyword or phrase" />
            <Tool name="binoculars" w={21} size={14} />
            <SignIn>
              <Icon name="user" size={14} />
              Sign In
              <Triangle $size={2} />
            </SignIn>
            <Tool name="exchange" w={18} size={12} />
            <Tool name="a360" w={20} size={13} />
            <Caret label="A360 menu" />
            <Separator />
            <Tool name="help" w={15} size={14} />
            <Caret label="Help menu" w={12} />
            <WindowControls>
              <WindowButton $w={22} aria-label="Minimize">
                <Icon name="minimize" size={9} />
              </WindowButton>
              <WindowButton $w={22} aria-label="Restore">
                <Icon name="restore" size={9} />
              </WindowButton>
              <WindowButton $w={41} aria-label="Close">
                <Icon name="cross" size={11} />
              </WindowButton>
            </WindowControls>
          </TitleBar>
          <RibbonTabs>
            {tabs.map((t, i) => (
              <RibbonTab key={t} $active={i === 0}>
                {t}
              </RibbonTab>
            ))}
            <RibbonDisplay>
              <Tool name="ribbonMin" w={14} size={12} />
              <Caret label="Ribbon display" />
            </RibbonDisplay>
          </RibbonTabs>
        </Header>

        <Ribbon>
          <Panel title="Modeling" w={106} menu>
            <BigButton $w={34}>
              <BigArt>
                <BoxArt />
              </BigArt>
              Box
              <Triangle $size={2} />
            </BigButton>
            <BigButton $w={48}>
              <BigArt>
                <BoxArt blue />
              </BigArt>
              Extrude
              <Triangle $size={2} />
            </BigButton>
            <ToolGrid $cols="1fr">{toolRows([["polysolid"], ["presspull"]], false)}</ToolGrid>
          </Panel>
          <Panel title="Mesh" w={62} launcher>
            <BigButton $w={38}>
              <BigArt>
                <SmoothArt />
              </BigArt>
              Smooth
              <br />
              Object
            </BigButton>
            <ToolGrid $cols="1fr">{toolRows([["meshMore"], ["meshLess"], ["meshRefine"]], false)}</ToolGrid>
          </Panel>
          <Panel title="Solid Editing" w={76} menu>
            <ToolGrid $cols="23px 21px 21px 7px">
              {toolRows([
                ["union", "cubeGrey", "boxEdges"],
                ["subtract", "slice", "boxExtrude"],
                ["intersect", "thicken", "separate"],
              ])}
            </ToolGrid>
          </Panel>
          <Panel title="Draw" w={76} menu>
            <ToolGrid $cols="21px 19px 24px 7px">
              {toolRows([
                ["polyline", "helix", "arc"],
                ["spline", "line", "circle"],
                ["polygon", "rect", "ellipse"],
              ])}
            </ToolGrid>
          </Panel>
          <Panel title="Modify" w={116} menu>
            <ToolGrid $cols="21px 22px 17px 26px 15px 12px">
              {toolRows([
                ["threeScale", "gizmoMove", "move", "copy", "trim"],
                ["align", "gizmoRotate", "rotate", "stretch", "fillet"],
                ["erase", "gizmoScale", "scale", "mirror", "array"],
              ])}
            </ToolGrid>
          </Panel>
          <Panel title="Section" w={61} menu launcher>
            <BigButton $w={58}>
              <BigArt>
                <SectionArt />
              </BigArt>
              Section
              <br />
              Plane
            </BigButton>
          </Panel>
          <Panel title="Coordinates" w={116} launcher>
            <ToolGrid $cols="22px 9px 23px 21px 18px 20px">
              <Tool name="ucsIcon" />
              <Caret label="UCS icon options" />
              {["ucsSheet", "ucsOrigin", "ucsNamed", "ucsWorld"].map((n) => (
                <Tool key={n} name={n} />
              ))}
              <Tool name="ucsRot" />
              <Caret label="Rotation options" />
              {["ucsPrev", "ucsVector", "ucsZ", "ucs3"].map((n) => (
                <Tool key={n} name={n} />
              ))}
              <Tool name="ucsFace" />
              <Caret label="Face options" />
              <SpanCell>
                <Picker>
                  <Icon name="ucsWorld" size={14} />
                  <PickerSelect aria-label="Coordinate system">
                    <option>World</option>
                  </PickerSelect>
                  <Triangle />
                </Picker>
              </SpanCell>
            </ToolGrid>
          </Panel>
          <Panel title="View" w={102} menu>
            <ViewColumn>
              <Picker>
                <Icon name="shaded" size={13} />
                <PickerSelect aria-label="Visual style">
                  <option>Shaded with e...</option>
                </PickerSelect>
                <Triangle />
              </Picker>
              <Picker>
                <Icon name="viewSaved" size={12} />
                <PickerSelect aria-label="Saved view">
                  <option>Unsaved View</option>
                </PickerSelect>
                <Triangle />
              </Picker>
              <Inline>
                <Tool name="viewCube" w={18} />
                <Caret label="View options" />
              </Inline>
            </ViewColumn>
          </Panel>
          <Panel title="Layers" w={219} menu>
            <BigButton $w={47}>
              <BigArt>
                <LayerArt />
              </BigArt>
              Layer
              <br />
              Properties
            </BigButton>
            <LayerTools>
              <Picker>
                <Icon name="bulb" size={13} />
                <Icon name="sun" size={13} />
                <Icon name="unlock" size={13} />
                <Icon name="swatch" size={13} />
                <PickerSelect aria-label="Current layer">
                  <option>0</option>
                </PickerSelect>
                <Triangle />
              </Picker>
              <ToolGrid $cols="19px 19px 20px 19px 19px">
                {toolRows(
                  [
                    ["layOff", "layIso", "layFreeze", "layLock", "layCurrent"],
                    ["layOn", "layUniso", "layThaw", "layUnlock", "layMatch"],
                  ],
                  false
                )}
              </ToolGrid>
            </LayerTools>
          </Panel>
          <Collapsed $w={49}>
            <CollapsedArt $h={28}>
              <SelectionArt />
            </CollapsedArt>
            Selection
            <Triangle />
          </Collapsed>
          <Collapsed $w={49}>
            <CollapsedArt $h={16}>
              <Icon name="groups" size={14} />
            </CollapsedArt>
            Groups
            <Triangle />
          </Collapsed>
          <Collapsed $w={49}>
            <CollapsedArt $h={28}>
              <ViewArt />
            </CollapsedArt>
            View
            <Triangle />
          </Collapsed>
        </Ribbon>

        <DocTabs>
          <DocTab $w={104}>Start</DocTab>
          <DocTab $w={194} $active>
            Spirax3D - Muro curvo 3d 1 Autocad*
            <Icon name="cross" size={9} />
          </DocTab>
          <AddTab aria-label="New drawing">
            <Icon name="plus" size={9} />
          </AddTab>
        </DocTabs>

        <Workspace>
          <PlanPane>
            <PlanDrawing />
          </PlanPane>
          <Splitter />
          <IsoPane>
            <IsoBar>
              <span>[+][SW Isometric][Shaded with edges]</span>
              <PaneControls>
                <Tool name="minimize" size={10} />
                <Tool name="restore" size={10} />
                <Tool name="cross" size={10} />
              </PaneControls>
            </IsoBar>
            <IsoDrawing />
          </IsoPane>
        </Workspace>

        <CommandArea>
          <CommandGrip>
            <Icon name="cross" size={12} />
            <Icon name="wrench" size={13} />
          </CommandGrip>
          <History>Select object or bounded area:</History>
          <CommandRow>
            <Icon name="prompt" size={13} />
            <Triangle $size={2} />
            <CommandInput aria-label="Command" placeholder="Type a command" />
          </CommandRow>
        </CommandArea>

        <StatusBar>
          <LayoutTabs>
            <LayoutTab $active>Model</LayoutTab>
            <LayoutTab>Layout1</LayoutTab>
            <LayoutTab>Layout2</LayoutTab>
            <AddTab aria-label="New layout">
              <Icon name="plus" size={9} />
            </AddTab>
          </LayoutTabs>
          <StatusTools>
            {statusItems.map(([name, menu]) => (
              <StatusGroup key={name}>
                <Tool name={name} size={13} />
                {menu && <Caret label={`${name} options`} w={7} size={3} />}
              </StatusGroup>
            ))}
          </StatusTools>
        </StatusBar>
      </Page>
    </>
  );
}
